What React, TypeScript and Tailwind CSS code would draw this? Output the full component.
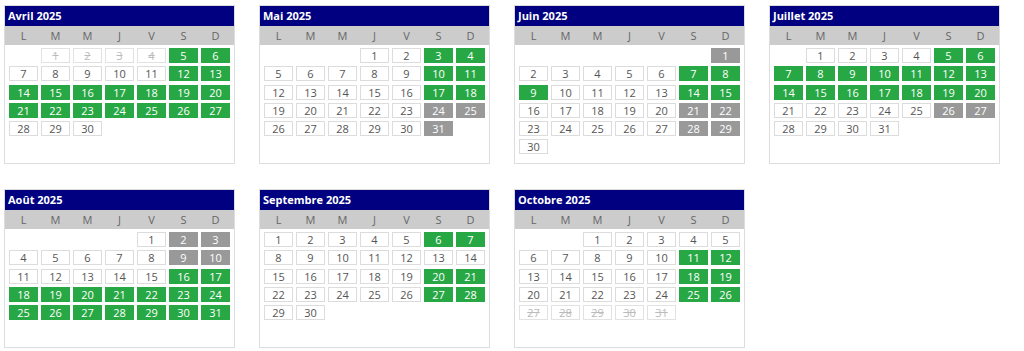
type Status = 'w' | 'g' | 'x' | 'd';

interface Month {
  title: string;
  offset: number; // empty cells before day 1 (Monday first)
  // one letter per day: w = libre, g = vert, x = gris, d = passé
  days: string;
}

const months: Month[] = [
  { title: 'Avril 2025', offset: 1, days: 'ddddggwwwwwggggggggggggggggwww' },
  { title: 'Mai 2025', offset: 3, days: 'wwggwwwwwggwwwwwggwwwwwxxwwwwwx' },
  { title: 'Juin 2025', offset: 6, days: 'xwwwwwgggwwwwggwwwwwxxwwwwwxxw' },
  { title: 'Juillet 2025', offset: 1, days: 'wwwwggggggggggggggggwwwwwxxwwww' },
  { title: 'Août 2025', offset: 4, days: 'wxxwwwwwxxwwwwwgggggggggggggggg' },
  { title: 'Septembre 2025', offset: 0, days: 'wwwwwggwwwwwwwwwwwwggwwwwwggww' },
  { title: 'Octobre 2025', offset: 2, days: 'wwwwwwwwwwggwwwwwggwwwwwggddddd' },
];

const dayNames = ['L', 'M', 'M', 'J', 'V', 'S', 'D'];

const cellStyles: Record<Status, string> = {
  w: 'bg-white border-[#dcdcdc] text-[#555]',
  g: 'bg-[#28a745] border-[#28a745] text-white',
  x: 'bg-[#999999] border-[#999999] text-white',
  d: 'bg-white border-[#e2e2e2] text-[#bbb] line-through',
};

function Calendar({ month }: { month: Month }) {
  const statuses = month.days.split('') as Status[];
  return (
    <div className="w-[231px] border border-[#dddddd] bg-white">
      {/* Header */}
      <div className="h-[20px] bg-[#000080] text-white font-bold text-[11px] leading-[20px] pl-[3px]">
        {month.title}
      </div>

      {/* Day names */}
      <div className="grid grid-cols-7 h-[19px] bg-[#cccccc] text-[#666] text-[11px] leading-[19px] px-[4px] gap-x-[3px]">
        {dayNames.map((d, i) => (
          <span key={i} className="text-center">{d}</span>
        ))}
      </div>

      {/* Days */}
      <div className="h-[118px] px-[4px] pt-[3px]">
        <div className="grid grid-cols-[repeat(7,29px)] gap-x-[3px] gap-y-[3.3px]">
          {Array.from({ length: month.offset }).map((_, i) => (
            <div key={'e' + i} className="h-[15px]" />
          ))}
          {statuses.map((s, i) => (
            <div
              key={i}
              className={`h-[15px] border text-[11px] leading-[13px] text-center ${cellStyles[s]}`}
            >
              {i + 1}
            </div>
          ))}
        </div>
      </div>
    </div>
  );
}

export default function App() {
  return (
    <div className="w-[1024px] h-[351px] bg-white pl-[4px] pt-[5px] font-['Open_Sans',_'Noto_Sans',_sans-serif]">
      <div className="grid grid-cols-[repeat(4,231px)] gap-x-[24px] gap-y-[25px]">
        {months.map((m) => (
          <Calendar key={m.title} month={m} />
        ))}
      </div>
    </div>
  );
}
